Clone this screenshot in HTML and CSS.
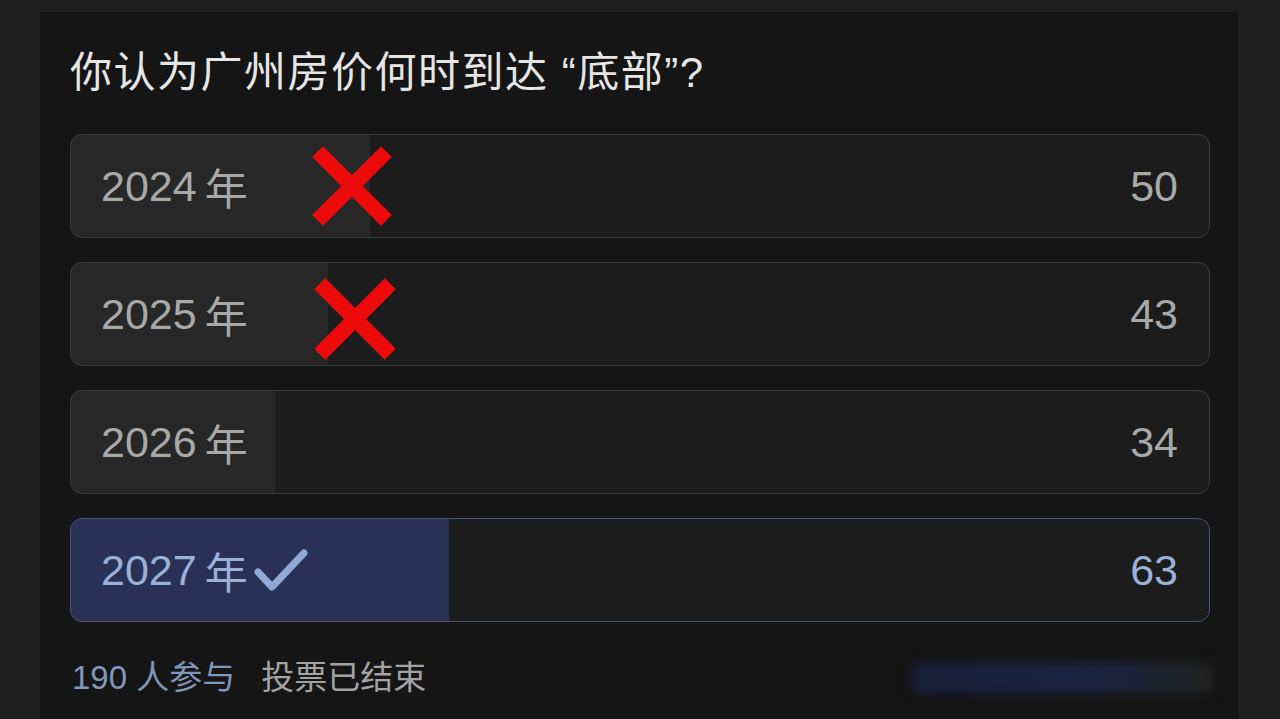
FILE: index.html
```html
<!doctype html>
<html>
	<head>
		<title>投票</title>
		<meta charset="utf8">
		<link rel="stylesheet" href="styles.css">
	</head>
	<body>
		<div class="card">
			<h1 class="question">你认为广州房价何时到达 “底部”?</h1>
			<div class="options">
				<div class="option" style="--p:26.3%">
					<span class="label">2024<span class="unit">年</span></span>
					<span class="count">50</span>
					<svg class="cross first" viewBox="0 0 100 100">
						<line x1="7" y1="7" x2="93" y2="93"/>
						<line x1="93" y1="7" x2="7" y2="93"/>
					</svg>
				</div>
				<div class="option" style="--p:22.6%">
					<span class="label">2025<span class="unit">年</span></span>
					<span class="count">43</span>
					<svg class="cross second" viewBox="0 0 100 100">
						<line x1="7" y1="7" x2="93" y2="93"/>
						<line x1="93" y1="7" x2="7" y2="93"/>
					</svg>
				</div>
				<div class="option" style="--p:17.9%">
					<span class="label">2026<span class="unit">年</span></span>
					<span class="count">34</span>
				</div>
				<div class="option chosen" style="--p:33.2%">
					<span class="label">2027<span class="unit">年</span>
						<svg class="tick" viewBox="0 0 54 44">
							<path d="M4 24 L18 39 L50 5"/>
						</svg>
					</span>
					<span class="count">63</span>
				</div>
			</div>
			<div class="footer">
				<span class="voters">190 人参与</span>
				<span class="state">投票已结束</span>
				<span class="mark"></span>
			</div>
		</div>
	</body>
</html>
```

FILE: styles.css
```css
* {
	margin: 0;
	padding: 0;
	box-sizing: border-box;
}
html, body {
	background-color: #1e1e1e;
	font-family: "Liberation Sans", "Noto Sans CJK SC", sans-serif;
	height: 100%;
	overflow: hidden;
}
.card {
	margin: 12px 42px 0 40px;
	height: 100%;
	background-color: #151515;
	padding: 31px 28px 0 30px;
}
.question {
	font-weight: normal;
	font-size: 42px;
	line-height: 60px;
	height: 60px;
	color: #e6e6e6;
	letter-spacing: 1.5px;
}
.options {
	margin-top: 31px;
	display: flex;
	flex-direction: column;
	gap: 24px;
}
.option {
	position: relative;
	height: 104px;
	border: 1px solid #3a3a3a;
	border-radius: 12px;
	background: linear-gradient(to right, #272727 var(--p), #1c1c1c var(--p));
	display: flex;
	align-items: center;
	justify-content: space-between;
	padding: 0 31px 0 30px;
	color: #a9a9a9;
	font-size: 43px;
}
.label {
	display: flex;
	align-items: center;
}
.unit {
	margin-left: 8px;
}
.chosen {
	border-color: #4a5476;
	background: linear-gradient(to right, #2a3156 var(--p), #1c1c1c var(--p));
	color: #9cb1d8;
}
.tick {
	width: 54px;
	height: 44px;
	margin-left: 6px;
}
.tick path {
	fill: none;
	stroke: #8fa9d6;
	stroke-width: 7;
	stroke-linecap: round;
	stroke-linejoin: round;
}
.cross {
	position: absolute;
	width: 80px;
	height: 80px;
}
.cross.first {
	left: 241px;
	top: 11px;
}
.cross.second {
	left: 243px;
	top: 15px;
	width: 82px;
	height: 82px;
}
.cross line {
	stroke: #ec0a0a;
	stroke-width: 19;
	stroke-linecap: butt;
}
.footer {
	margin-top: 34px;
	display: flex;
	align-items: center;
	font-size: 33px;
	line-height: 44px;
	padding-left: 2px;
}
.voters {
	color: #8096ba;
}
.state {
	margin-left: 26px;
	color: #a3a3a3;
}
.mark {
	margin-left: auto;
	margin-right: -2px;
	width: 300px;
	height: 30px;
	background: linear-gradient(to right, #18203a, #1a2442 60%, #222222);
	filter: blur(5px);
	border-radius: 6px;
}
```
